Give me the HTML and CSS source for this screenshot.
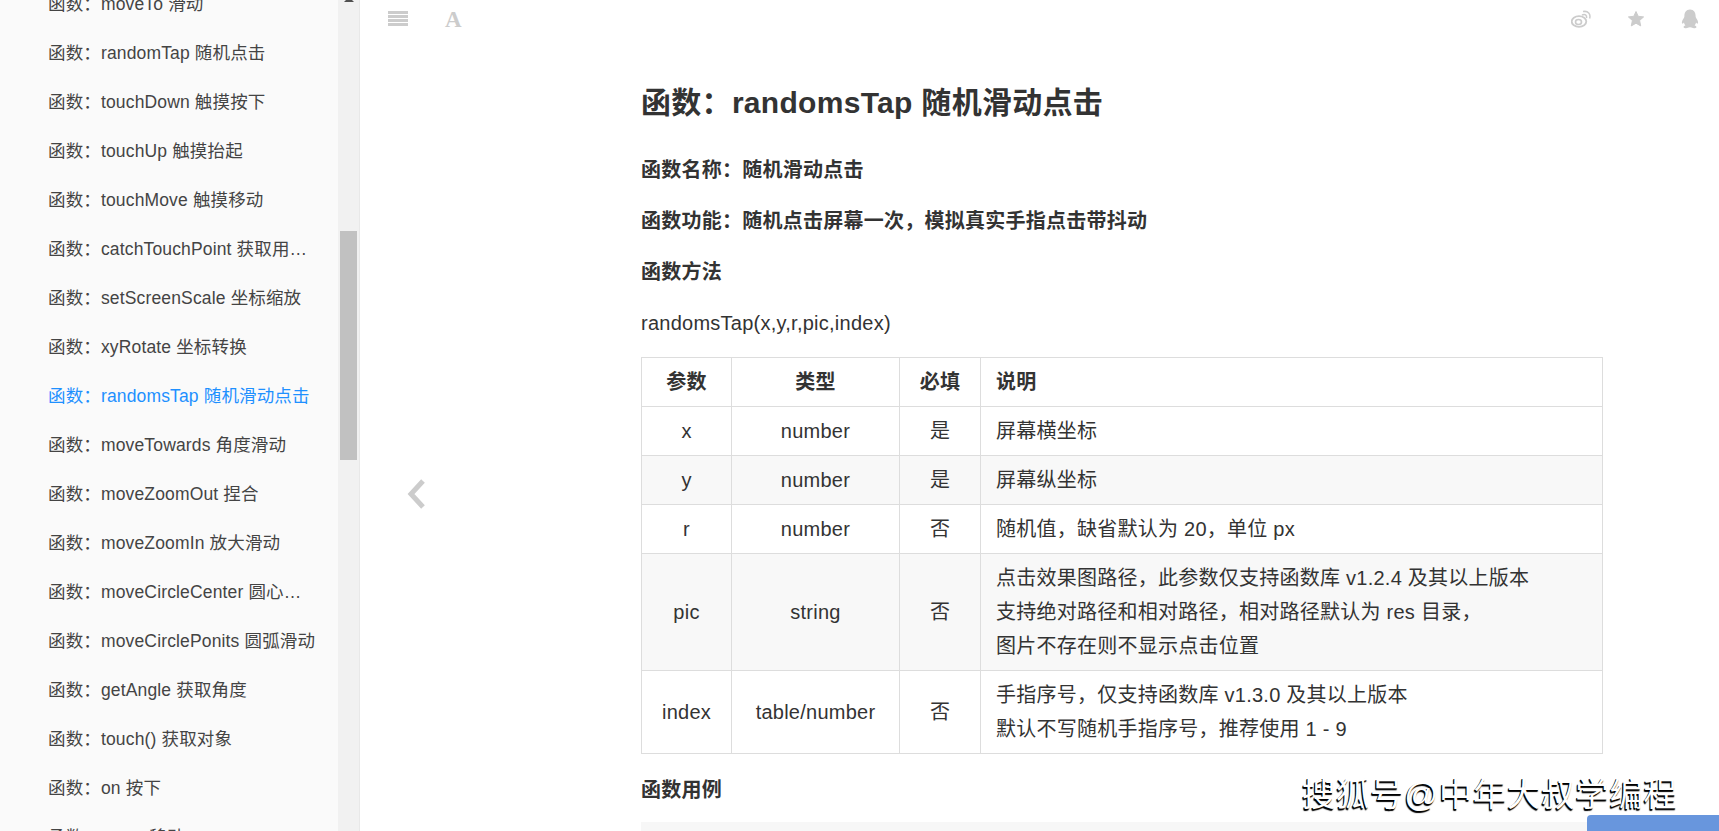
FILE: index.html
```html
<!DOCTYPE html>
<html lang="zh-CN">
<head>
    <meta charset="utf-8" />
    <title>函数：randomsTap 随机滑动点击</title>
    <link rel="stylesheet" href="styles.css">
</head>
<body>
    <aside class="sidebar">
        <ul class="summary">
            <li>函数：moveTo 滑动</li>
            <li>函数：randomTap 随机点击</li>
            <li>函数：touchDown 触摸按下</li>
            <li>函数：touchUp 触摸抬起</li>
            <li>函数：touchMove 触摸移动</li>
            <li>函数：catchTouchPoint 获取用户触摸点</li>
            <li>函数：setScreenScale 坐标缩放</li>
            <li>函数：xyRotate 坐标转换</li>
            <li class="active">函数：randomsTap 随机滑动点击</li>
            <li>函数：moveTowards 角度滑动</li>
            <li>函数：moveZoomOut 捏合</li>
            <li>函数：moveZoomIn 放大滑动</li>
            <li>函数：moveCircleCenter 圆心滑动</li>
            <li>函数：moveCirclePonits 圆弧滑动</li>
            <li>函数：getAngle 获取角度</li>
            <li>函数：touch() 获取对象</li>
            <li>函数：on 按下</li>
            <li>函数：move 移动</li>
        </ul>
        <div class="scrollbar">
            <span class="scroll-arrow"></span>
            <span class="scroll-thumb"></span>
        </div>
    </aside>

    <main class="book">
        <header class="toolbar">
            <div class="tools">
                <svg class="icon-menu" width="20" height="15" viewBox="0 0 20 15">
                    <rect y="0" width="20" height="3"/>
                    <rect y="4" width="20" height="3"/>
                    <rect y="8" width="20" height="3"/>
                    <rect y="12" width="20" height="3"/>
                </svg>
                <span class="icon-font">A</span>
            </div>
            <div class="tools tools--right">
                <svg width="20" height="18" viewBox="0 0 20 18">
                    <ellipse cx="8" cy="11.5" rx="7.3" ry="5.3" fill="none" stroke="#ccc" stroke-width="1.8"/>
                    <ellipse cx="7.5" cy="12" rx="3" ry="2.5" fill="none" stroke="#ccc" stroke-width="1.6"/>
                    <path d="M11 5 C14 3.5 16 5 15.6 8" fill="none" stroke="#ccc" stroke-width="1.5"/>
                    <path d="M12 1.6 C17 0.5 20 4 18.6 8.5" fill="none" stroke="#ccc" stroke-width="1.5"/>
                </svg>
                <svg width="18" height="18" viewBox="0 0 18 18">
                    <polygon points="9,1.5 11.2,6.3 16.6,6.9 12.6,10.5 13.7,15.9 9,13.2 4.3,15.9 5.4,10.5 1.4,6.9 6.8,6.3" fill="#ccc" stroke="#ccc" stroke-linejoin="round"/>
                </svg>
                <svg width="18" height="20" viewBox="0 0 18 20">
                    <path d="M9 0.5 C13 0.5 14.6 3.6 14.6 7 C14.6 8.2 15 8.8 15.6 9.8 C16.8 11.6 17.6 13.6 16.8 14.6 C16.3 15 15.6 14.4 15 13.6 C14.8 15 14.2 15.8 13.6 16.4 C15 16.8 15.6 17.4 15.4 18.2 C15 19.2 12.6 19.4 11 18.8 C10 18.4 9.6 18.2 9 18.2 C8.4 18.2 8 18.4 7 18.8 C5.4 19.4 3 19.2 2.6 18.2 C2.4 17.4 3 16.8 4.4 16.4 C3.8 15.8 3.2 15 3 13.6 C2.4 14.4 1.7 15 1.2 14.6 C0.4 13.6 1.2 11.6 2.4 9.8 C3 8.8 3.4 8.2 3.4 7 C3.4 3.6 5 0.5 9 0.5 Z" fill="#ccc"/>
                </svg>
            </div>
        </header>

        <svg class="nav-prev" width="20" height="30" viewBox="0 0 20 30">
            <path d="M17 2 L5 15 L17 28" fill="none" stroke="#ccc" stroke-width="5"/>
        </svg>

        <article class="page">
            <h1>函数：randomsTap 随机滑动点击</h1>
            <p><strong>函数名称：随机滑动点击</strong></p>
            <p><strong>函数功能：随机点击屏幕一次，模拟真实手指点击带抖动</strong></p>
            <p><strong>函数方法</strong></p>
            <p>randomsTap(x,y,r,pic,index)</p>

            <table>
                <colgroup>
                    <col class="col-name">
                    <col class="col-type">
                    <col class="col-req">
                    <col>
                </colgroup>
                <thead>
                    <tr>
                        <th>参数</th>
                        <th>类型</th>
                        <th>必填</th>
                        <th class="left">说明</th>
                    </tr>
                </thead>
                <tbody>
                    <tr>
                        <td>x</td>
                        <td>number</td>
                        <td>是</td>
                        <td class="left">屏幕横坐标</td>
                    </tr>
                    <tr>
                        <td>y</td>
                        <td>number</td>
                        <td>是</td>
                        <td class="left">屏幕纵坐标</td>
                    </tr>
                    <tr>
                        <td>r</td>
                        <td>number</td>
                        <td>否</td>
                        <td class="left">随机值，缺省默认为 20，单位 px</td>
                    </tr>
                    <tr>
                        <td>pic</td>
                        <td>string</td>
                        <td>否</td>
                        <td class="left">点击效果图路径，此参数仅支持函数库 v1.2.4 及其以上版本<br>支持绝对路径和相对路径，相对路径默认为 res 目录，<br>图片不存在则不显示点击位置</td>
                    </tr>
                    <tr>
                        <td>index</td>
                        <td>table/number</td>
                        <td>否</td>
                        <td class="left">手指序号，仅支持函数库 v1.3.0 及其以上版本<br>默认不写随机手指序号，推荐使用 1 - 9</td>
                    </tr>
                </tbody>
            </table>

            <p class="example-title"><strong>函数用例</strong></p>
            <pre class="code"></pre>
        </article>

        <div class="watermark">搜狐号@中年大叔学编程</div>
        <div class="corner-box"></div>
    </main>
</body>
</html>
```

FILE: styles.css
```css
*{
    box-sizing:border-box;
}
html,body{
    height:100%;
}
body{
    margin:0;
    display:flex;
    overflow:hidden;
    font-family:"Liberation Sans","Noto Sans CJK SC",sans-serif;
    color:#333;
}
.sidebar{
    flex:0 0 360px;
    height:831px;
    display:flex;
    overflow:hidden;
    background:#fafafa;
    border-right:1px solid #e8e8e8;
}
.summary{
    flex:0 0 338px;
    min-width:0;
    list-style:none;
    margin:-20px 0 0;
    padding:0;
    font-size:17.5px;
    letter-spacing:.15px;
    color:#444;
}
.summary li{
    height:49px;
    line-height:49px;
    padding-left:48px;
    padding-right:20px;
    white-space:nowrap;
    overflow:hidden;
    text-overflow:ellipsis;
}
.summary .active{
    color:#1e90ff;
}
.scrollbar{
    flex:1;
    display:flex;
    flex-direction:column;
    align-items:center;
    background:#f1f1f1;
}
.scroll-arrow{
    flex:none;
    width:0;
    height:0;
    margin-top:-3px;
    border-left:5px solid transparent;
    border-right:5px solid transparent;
    border-bottom:5px solid #505050;
}
.scroll-thumb{
    flex:none;
    width:17px;
    height:229px;
    margin-top:229px;
    background:#c1c1c1;
}
.book{
    flex:1;
    position:relative;
    height:831px;
    overflow:hidden;
    background:#fff;
}
.toolbar{
    display:flex;
    justify-content:space-between;
    height:37px;
    padding:0 20px 0 28px;
}
.tools{
    display:flex;
    align-items:center;
    gap:37px;
    fill:#ccc;
}
.tools--right{
    gap:36px;
}
.icon-font{
    padding-top:3px;
    font-family:"Liberation Serif",serif;
    font-weight:700;
    font-size:23px;
    line-height:24px;
    color:#ccc;
}
.nav-prev{
    position:absolute;
    left:46px;
    top:479px;
}
.page{
    width:962px;
    margin-left:281px;
    padding-top:45px;
    font-size:20px;
    letter-spacing:.25px;
    line-height:34px;
}
h1{
    margin:0 0 29px;
    font-size:30px;
    line-height:42px;
    letter-spacing:.3px;
}
p{
    margin:0 0 17px;
}
table{
    width:100%;
    table-layout:fixed;
    border-collapse:collapse;
}
.col-name{
    width:90px;
}
.col-type{
    width:168px;
}
.col-req{
    width:81px;
}
th,td{
    padding:7px 15px;
    border:1px solid #ddd;
    text-align:center;
}
.left{
    text-align:left;
}
tbody tr:nth-child(2n){
    background:#f8f8f8;
}
.example-title{
    margin:19px 0 15px;
}
.code{
    margin:0;
    height:60px;
    background:#f7f7f7;
}
.watermark{
    position:absolute;
    left:942px;
    top:775px;
    font-size:33.5px;
    line-height:40px;
    letter-spacing:.6px;
    color:#fff;
    text-shadow:-1px 1px 0 #000,-1px 2px 1px #000;
}
.corner-box{
    position:absolute;
    left:1227px;
    top:815px;
    width:132px;
    height:16px;
    background:#6896dd;
    border-top-left-radius:4px;
}
```
